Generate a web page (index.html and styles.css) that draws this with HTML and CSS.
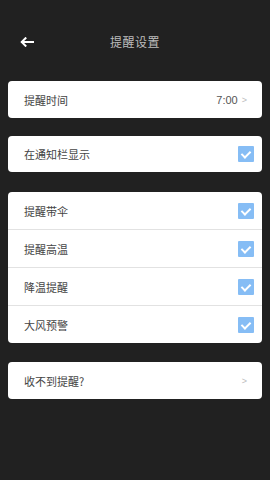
FILE: index.html
```html
<!DOCTYPE html>
<html lang="zh">
<head>
<meta charset="utf-8">
<link rel="stylesheet" href="styles.css">
</head>
<body>
<header class="header">
  <svg class="back" width="14" height="10" viewBox="0 0 14 10"><path d="M13 5H2M5.5 1.2L1.7 5l3.8 3.8" fill="none" stroke="#fff" stroke-width="2" stroke-linecap="square"/></svg>
  <div class="title">提醒设置</div>
</header>
<main class="list">
  <section class="card c1">
    <div class="row"><span class="label">提醒时间</span><span class="value">7:00<span class="chev">&gt;</span></span></div>
  </section>
  <section class="card c2">
    <div class="row"><span class="label">在通知栏显示</span><span class="cb"></span></div>
  </section>
  <section class="card c3">
    <div class="row"><span class="label">提醒带伞</span><span class="cb"></span></div>
    <div class="row"><span class="label">提醒高温</span><span class="cb"></span></div>
    <div class="row"><span class="label">降温提醒</span><span class="cb"></span></div>
    <div class="row"><span class="label">大风预警</span><span class="cb"></span></div>
  </section>
  <section class="card c4">
    <div class="row"><span class="label">收不到提醒?</span><span class="chev">&gt;</span></div>
  </section>
</main>
</body>
</html>
```
FILE: styles.css
```css
html, body { margin: 0; padding: 0; }
body {
  background: #212121;
  width: 270px;
  height: 480px;
  font-family: "Noto Sans CJK SC", "Noto Sans", sans-serif;
  overflow: hidden;
}
.header {
  position: relative;
  height: 81px;
  box-sizing: border-box;
  padding-top: 2px;
  display: flex;
  align-items: center;
  justify-content: center;
}
.back {
  position: absolute;
  left: 20px;
  top: 37px;
}
.title {
  color: #bdbdbd;
  font-size: 12px;
  letter-spacing: 0.5px;
}
.list {
  display: flex;
  flex-direction: column;
  padding: 0 8px;
}
.card {
  background: #fff;
  border-radius: 4px;
  overflow: hidden;
}
.c1 .row { height: 37px; }
.c2 { margin-top: 18px; }
.c2 .row { height: 36px; }
.c3 { margin-top: 20px; }
.c3 .row { height: 37px; border-bottom: 1px solid #e2e2e2; }
.c3 .row:last-child { border-bottom: none; }
.c4 { margin-top: 19px; }
.c4 .row { height: 37px; }
.row {
  display: flex;
  align-items: center;
  justify-content: space-between;
  padding: 0 8px 0 16px;
}
.label {
  color: #444;
  font-size: 11px;
}
.value {
  color: #555;
  font-size: 11px;
  font-family: "Liberation Sans", sans-serif;
  display: flex;
  align-items: center;
  margin-right: 7px;
}
.chev {
  color: #bbb;
  font-size: 9px;
  font-family: "Liberation Sans", sans-serif;
  margin-left: 4px;
}
.c4 .chev { margin-right: 7px; }
.cb {
  width: 16px;
  height: 16px;
  background: #86bdf5;
  border-radius: 1px;
  position: relative;
}
.cb::after {
  content: "";
  position: absolute;
  left: 5px;
  top: 3px;
  width: 4px;
  height: 7px;
  border-right: 2px solid #fff;
  border-bottom: 2px solid #fff;
  transform: rotate(45deg);
}
```
